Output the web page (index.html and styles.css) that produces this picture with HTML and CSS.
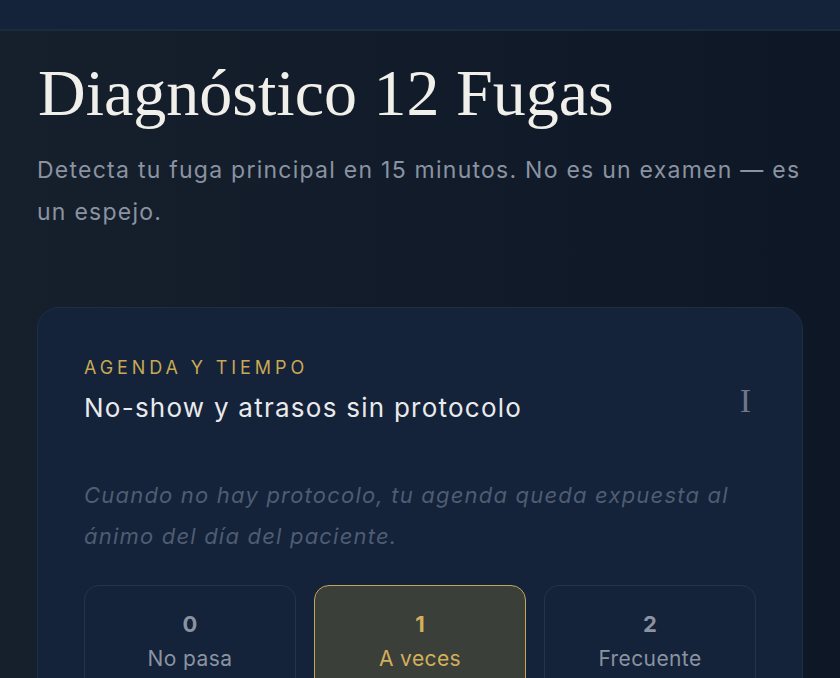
FILE: index.html
```html
<!DOCTYPE html>
<html lang="es">
<head>
<meta charset="utf-8">
<title>Diagnóstico 12 Fugas</title>
<link rel="stylesheet" href="styles.css">
</head>
<body>
<header class="topbar"></header>
<main class="page">
  <h1 class="title">Diagnóstico 12 Fugas</h1>
  <p class="subtitle">Detecta tu fuga principal en 15 minutos. No es un examen — es un espejo.</p>
  <section class="card">
    <div class="card-head">
      <div class="card-titles">
        <div class="eyebrow">AGENDA Y TIEMPO</div>
        <h2 class="question">No-show y atrasos sin protocolo</h2>
      </div>
      <span class="numeral">I</span>
    </div>
    <p class="hint">Cuando no hay protocolo, tu agenda queda expuesta al ánimo del día del paciente.</p>
    <div class="options">
      <button class="option"><span class="opt-num">0</span><span class="opt-label">No pasa</span></button>
      <button class="option selected"><span class="opt-num">1</span><span class="opt-label">A veces</span></button>
      <button class="option"><span class="opt-num">2</span><span class="opt-label">Frecuente</span></button>
    </div>
  </section>
</main>
</body>
</html>
```

FILE: styles.css
```css
html, body {
  margin: 0;
  padding: 0;
}
body {
  background: linear-gradient(90deg, #161f2c 0%, #121b29 50%, #0e1726 100%);
  font-family: "Inter", "DejaVu Sans", sans-serif;
  color: #e6e7ea;
  min-height: 678px;
  overflow: hidden;
}
.topbar {
  height: 29px;
  background: #14223a;
  border-bottom: 2px solid #1d2b40;
}
.page {
  padding: 22px 37px 0 37px;
}
.title {
  margin: 0 0 0 1px;
  font-family: "Liberation Serif", "DejaVu Serif", serif;
  font-weight: 400;
  font-size: 66px;
  line-height: 80px;
  color: #f1efea;
  letter-spacing: 0;
}
.subtitle {
  margin: 16px 0 0 0;
  font-size: 23px;
  line-height: 42px;
  letter-spacing: 1.25px;
  color: #8a93a1;
  font-weight: 400;
}
.card {
  margin-top: 74px;
  background: #14223a;
  border: 1.5px solid #1f2e44;
  border-radius: 22px;
  padding: 48px 46px 0 46px;
  height: 420px;
}
.card-head {
  display: flex;
  justify-content: space-between;
  align-items: flex-end;
}
.eyebrow {
  font-size: 18px;
  letter-spacing: 3.9px;
  color: #c8a953;
  line-height: 24px;
}
.question {
  margin: 11px 0 0 0;
  font-size: 26px;
  font-weight: 400;
  line-height: 34px;
  letter-spacing: 1.25px;
  color: #e9eaec;
}
.numeral {
  font-family: "Liberation Serif", "DejaVu Serif", serif;
  font-size: 34px;
  line-height: 34px;
  color: #6d7787;
  margin-right: 5px;
  margin-bottom: 7px;
}
.hint {
  margin: 50px 0 0 0;
  font-style: italic;
  font-size: 22px;
  line-height: 41px;
  letter-spacing: 1.2px;
  color: #4e5d72;
}
.options {
  margin-top: 28px;
  display: grid;
  grid-template-columns: repeat(3, 1fr);
  gap: 18px;
}
.option {
  height: 120px;
  background: #14223a;
  border: 1.5px solid #253449;
  border-radius: 15px;
  display: flex;
  flex-direction: column;
  align-items: center;
  justify-content: flex-start;
  padding: 22px 0 0 0;
  font-family: inherit;
  color: #8a93a1;
  cursor: pointer;
}
.option.selected {
  background: #3b3f3a;
  border-color: #c3a55a;
  color: #d2b05a;
}
.opt-num {
  font-size: 22px;
  font-weight: 700;
  line-height: 32px;
}
.opt-label {
  font-size: 21px;
  line-height: 32px;
  letter-spacing: 0.4px;
  margin-top: 3px;
}
```
